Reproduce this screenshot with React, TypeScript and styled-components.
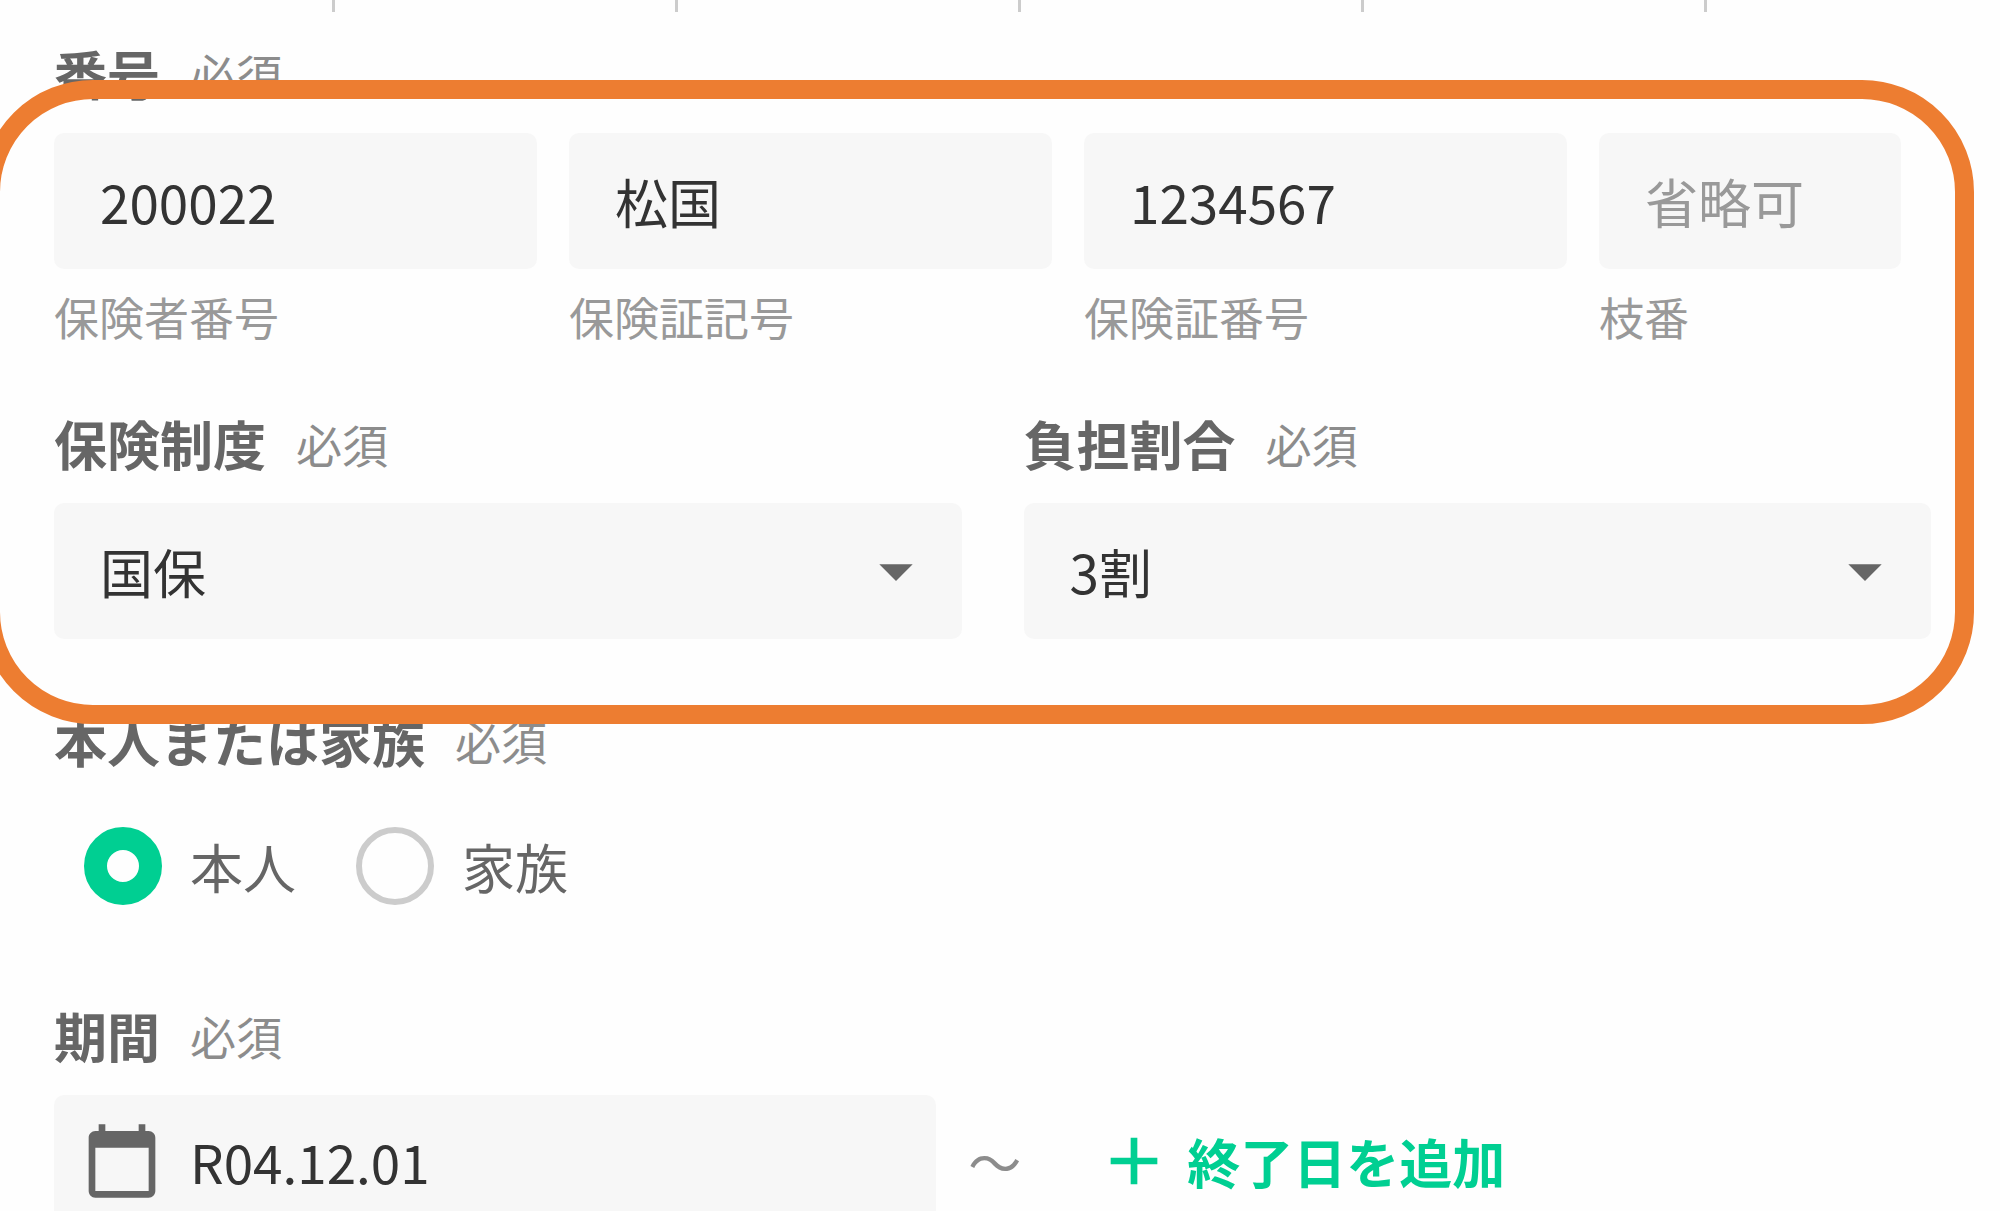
import React, { useState } from "react";
import styled, { createGlobalStyle } from "styled-components";

const color = {
  page: "#fefefe",
  field: "#f7f7f7",
  text: "#333333",
  label: "#666666",
  sub: "#8c8c8c",
  hint: "#999999",
  line: "#cccccc",
  accent: "#00cf92",
  mark: "#ed7d31",
};

const GlobalStyle = createGlobalStyle`
  *, *::before, *::after { box-sizing: border-box; }
  body {
    margin: 0;
    overflow: hidden;
    background: ${color.page};
    color: ${color.text};
    font-family: "Noto Sans CJK JP", "Noto Sans", sans-serif;
    font-size: 53px;
    line-height: 80px;
  }
  input, select, button { font: inherit; color: inherit; }
`;

const Page = styled.main`
  height: 100vh;
  overflow: hidden;
`;

const ColumnTicks = styled.div`
  display: grid;
  grid-template-columns: 335fr repeat(4, 343fr) 293fr;
  height: 12px;
`;

const Tick = styled.span`
  border-right: 3px solid ${color.line};

  &:last-child {
    border-right: 0;
  }
`;

const Form = styled.form`
  display: flex;
  flex-direction: column;
  padding: 21px 69px 0 54px;
`;

const Highlighted = styled.div`
  position: relative;
  display: flex;
  flex-direction: column;
  gap: 54px;
  margin-bottom: 61px;
`;

const HighlightFrame = styled.div`
  position: absolute;
  z-index: 1;
  inset: 47px -43px -85px -73px;
  border: 19px solid ${color.mark};
  border-radius: 112px;
  pointer-events: none;
`;

const Section = styled.div<{ $gap?: number }>`
  display: flex;
  flex-direction: column;
  gap: ${(p) => p.$gap ?? 20}px;
`;

const Heading = styled.div`
  display: flex;
  align-items: center;
  gap: 30px;
  color: ${color.label};
  font-weight: 700;
`;

const Required = styled.span`
  color: ${color.sub};
  font-size: 46px;
  font-weight: 400;
`;

const NumberRow = styled.div`
  display: grid;
  grid-template-columns: repeat(3, 483fr) 302fr;
  gap: 32px;
  padding-right: 30px;
`;

const NumberCell = styled.div`
  display: flex;
  flex-direction: column;
  gap: 16px;
  min-width: 0;
`;

const TextInput = styled.input`
  width: 100%;
  height: 136px;
  padding: 0 46px;
  border: 0;
  border-radius: 10px;
  background: ${color.field};

  &::placeholder {
    color: ${color.hint};
    opacity: 1;
  }
`;

const Caption = styled.label`
  color: ${color.hint};
  font-size: 45px;
  line-height: 64px;
`;

const SelectRow = styled.div`
  display: grid;
  grid-template-columns: 1fr 1fr;
  gap: 62px;
`;

const SelectBox = styled.div`
  display: grid;
  align-items: center;

  > * {
    grid-area: 1 / 1;
  }
`;

const Select = styled.select`
  appearance: none;
  width: 100%;
  height: 136px;
  padding: 0 46px;
  border: 0;
  border-radius: 10px;
  background: ${color.field};
`;

const Icon = styled.svg`
  flex: none;
  width: 80px;
  height: 80px;
  fill: currentColor;
`;

const SelectArrow = styled(Icon)`
  justify-self: end;
  margin-right: 26px;
  color: ${color.label};
  pointer-events: none;
`;

const RadioRow = styled.div`
  display: flex;
  gap: 60px;
  margin-bottom: 89px;
  padding-left: 30px;
`;

const RadioLabel = styled.label`
  display: flex;
  align-items: center;
  gap: 28px;
  color: ${color.label};
`;

const Radio = styled.input`
  appearance: none;
  width: 78px;
  height: 78px;
  margin: 0;
  border: 6px solid ${color.line};
  border-radius: 50%;

  &:checked {
    border: 23px solid ${color.accent};
  }
`;

const PeriodRow = styled.div`
  display: flex;
  align-items: center;
`;

const DateField = styled.div`
  display: flex;
  align-items: center;
  gap: 28px;
  width: 47%;
  height: 132px;
  padding: 0 28px;
  border-radius: 10px;
  background: ${color.field};
  color: ${color.label};
`;

const DateInput = styled.input`
  flex: 1;
  min-width: 0;
  padding: 0;
  border: 0;
  background: transparent;
  color: ${color.text};
`;

const Tilde = styled.span`
  margin: 0 73px 0 32px;
  color: ${color.sub};
`;

const AddButton = styled.button`
  display: flex;
  align-items: center;
  gap: 13px;
  padding: 0;
  border: 0;
  background: none;
  color: ${color.accent};
  font-weight: 700;
`;

const NUMBERS = [
  { id: "insurer", caption: "保険者番号", value: "200022" },
  { id: "symbol", caption: "保険証記号", value: "松国" },
  { id: "card", caption: "保険証番号", value: "1234567" },
  { id: "branch", caption: "枝番", value: "", placeholder: "省略可" },
];

const SELECTS = [
  { id: "system", label: "保険制度", options: ["国保", "社保", "後期高齢者"] },
  { id: "burden", label: "負担割合", options: ["3割", "2割", "1割"] },
];

const HOLDERS = ["本人", "家族"];

export default function App() {
  const [holder, setHolder] = useState("本人");

  return (
    <>
      <GlobalStyle />
      <Page>
        <ColumnTicks aria-hidden="true">
          {Array.from({ length: 6 }, (_, i) => (
            <Tick key={i} />
          ))}
        </ColumnTicks>
        <Form onSubmit={(e) => e.preventDefault()}>
          <Highlighted>
            <Section role="group" aria-labelledby="numbers">
              <Heading>
                <span id="numbers">番号</span>
                <Required>必須</Required>
              </Heading>
              <NumberRow>
                {NUMBERS.map((n) => (
                  <NumberCell key={n.id}>
                    <TextInput
                      id={n.id}
                      type="text"
                      defaultValue={n.value}
                      placeholder={n.placeholder}
                    />
                    <Caption htmlFor={n.id}>{n.caption}</Caption>
                  </NumberCell>
                ))}
              </NumberRow>
            </Section>
            <SelectRow>
              {SELECTS.map((s) => (
                <Section key={s.id}>
                  <Heading>
                    <label htmlFor={s.id}>{s.label}</label>
                    <Required>必須</Required>
                  </Heading>
                  <SelectBox>
                    <Select id={s.id}>
                      {s.options.map((o) => (
                        <option key={o}>{o}</option>
                      ))}
                    </Select>
                    <SelectArrow viewBox="0 0 24 24" aria-hidden="true">
                      <path d="M7 10l5 5 5-5z" />
                    </SelectArrow>
                  </SelectBox>
                </Section>
              ))}
            </SelectRow>
            <HighlightFrame aria-hidden="true" />
          </Highlighted>

          <Section $gap={46} role="radiogroup" aria-labelledby="holder">
            <Heading>
              <span id="holder">本人または家族</span>
              <Required>必須</Required>
            </Heading>
            <RadioRow>
              {HOLDERS.map((h) => (
                <RadioLabel key={h}>
                  <Radio
                    type="radio"
                    name="holder"
                    checked={holder === h}
                    onChange={() => setHolder(h)}
                  />
                  {h}
                </RadioLabel>
              ))}
            </RadioRow>
          </Section>

          <Section>
            <Heading>
              <label htmlFor="start">期間</label>
              <Required>必須</Required>
            </Heading>
            <PeriodRow>
              <DateField>
                <Icon viewBox="0 0 24 24" aria-hidden="true">
                  <path d="M20 3h-1V1h-2v2H7V1H5v2H4c-1.1 0-2 .9-2 2v16c0 1.1.9 2 2 2h16c1.1 0 2-.9 2-2V5c0-1.1-.9-2-2-2zm0 18H4V8h16v13z" />
                </Icon>
                <DateInput id="start" type="text" defaultValue="R04.12.01" />
              </DateField>
              <Tilde>〜</Tilde>
              <AddButton type="button">
                <Icon viewBox="0 0 24 24" aria-hidden="true">
                  <path d="M19 13h-6v6h-2v-6H5v-2h6V5h2v6h6z" />
                </Icon>
                終了日を追加
              </AddButton>
            </PeriodRow>
          </Section>
        </Form>
      </Page>
    </>
  );
}
